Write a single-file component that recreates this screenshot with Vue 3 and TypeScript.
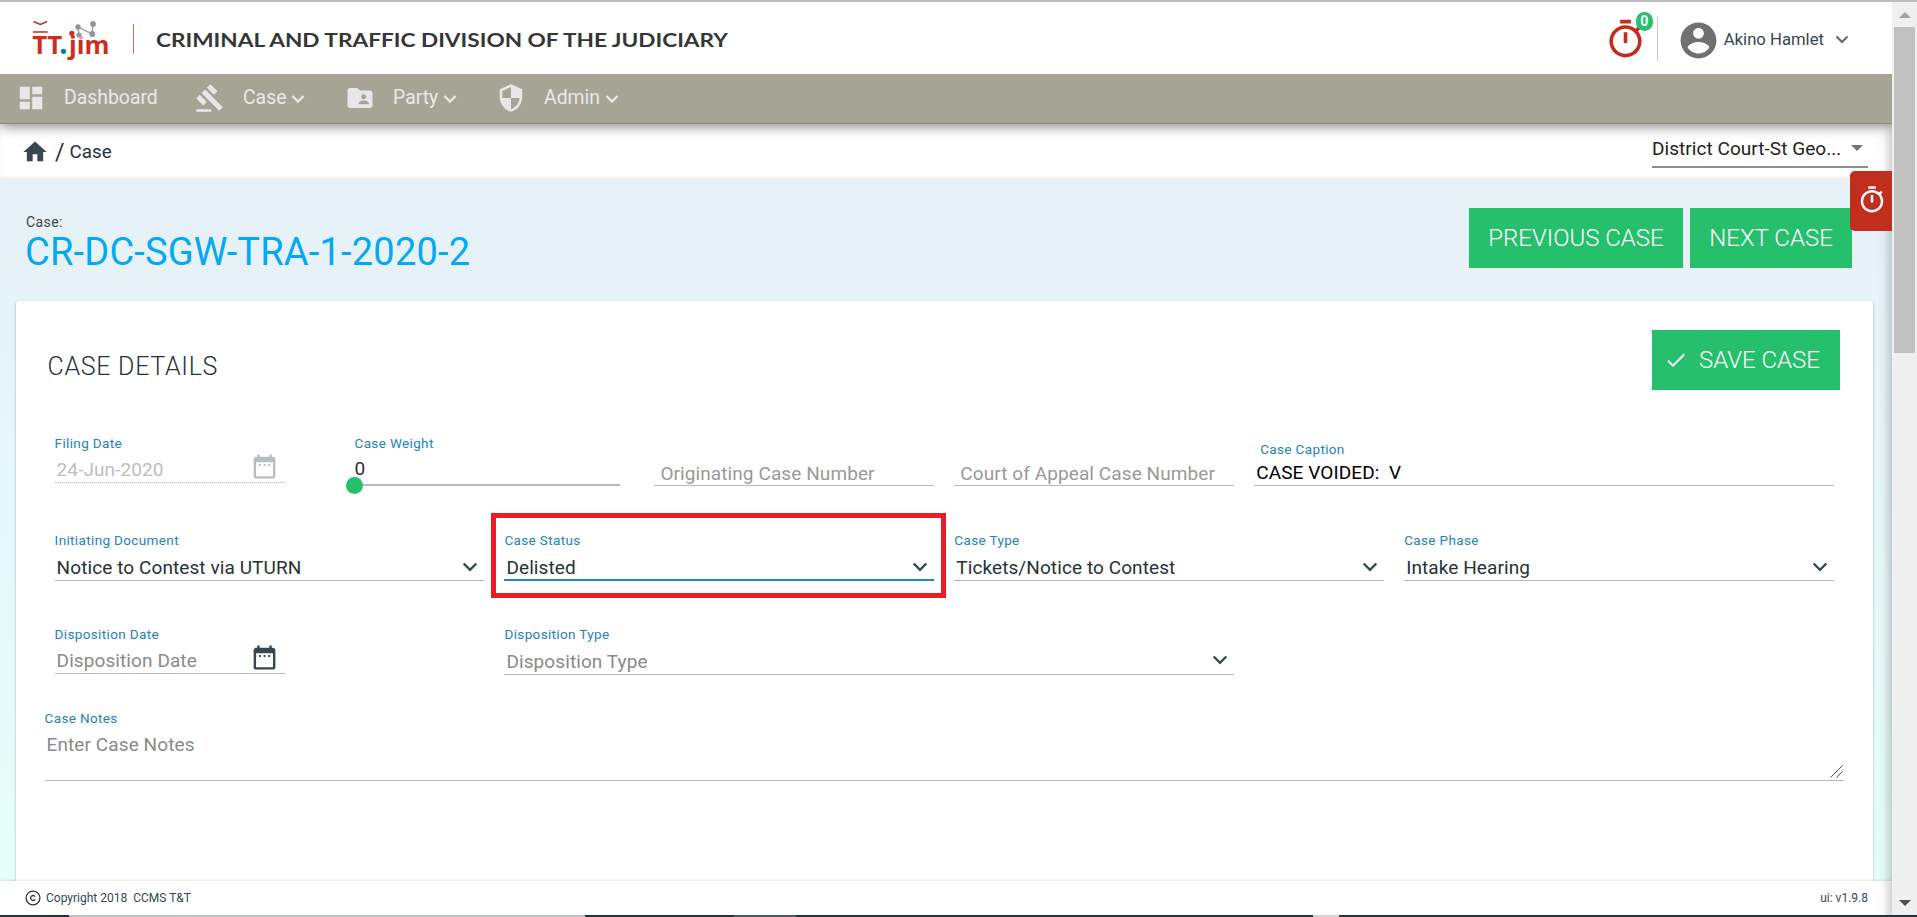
<script setup lang="ts">
import { ref } from 'vue'

interface NavItem {
  label: string
  icon: string
  menu: boolean
  cls: string
}

interface Field {
  label: string
  value: string
  focused?: boolean
}

const nav: NavItem[] = [
  { label: 'Dashboard', menu: false, cls: 'n-dash', icon: 'M3 13h8V3H3v10zm0 8h8v-6H3v6zm10 0h8V11h-8v10zm0-18v6h8V3h-8z' },
  {
    label: 'Case', menu: true, cls: 'n-case',
    icon: 'M1 21h12v2H1zM5.245 8.07l2.83-2.827 14.14 14.142-2.828 2.828zM12.317 1l5.657 5.656-2.83 2.83-5.654-5.66zM3.825 9.485l5.657 5.657-2.828 2.828-5.657-5.657z',
  },
  {
    label: 'Party', menu: true, cls: 'n-party',
    icon: 'M20 6h-8l-2-2H4c-1.1 0-1.99.9-1.99 2L2 18c0 1.1.9 2 2 2h16c1.1 0 2-.9 2-2V8c0-1.1-.9-2-2-2zm-5 3c1.1 0 2 .9 2 2s-.9 2-2 2-2-.9-2-2 .9-2 2-2zm4 8h-8v-1c0-1.33 2.67-2 4-2s4 .67 4 2v1z',
  },
  {
    label: 'Admin', menu: true, cls: 'n-admin',
    icon: 'M12 1L3 5v6c0 5.55 3.84 10.74 9 12 5.16-1.26 9-6.45 9-12V5l-9-4zm0 10.99h7c-.53 4.12-3.28 7.79-7 8.94V12H5V6.3l7-3.11v8.8z',
  },
]

const stopwatch =
  'M15 1H9v2h6V1zm-4 13h2V8h-2v6zm8.03-6.61l1.42-1.42c-.43-.51-.9-.99-1.41-1.41l-1.42 1.42C16.07 4.74 14.12 4 12 4c-4.97 0-9 4.03-9 9s4.02 9 9 9 9-4.03 9-9c0-2.12-.74-4.07-1.97-5.61zM12 20c-3.87 0-7-3.13-7-7s3.13-7 7-7 7 3.13 7 7-3.13 7-7 7z'

const calendar =
  'M9 10H7.5v1.5H9zM12.75 10h-1.5v1.5h1.5zM16.5 10H15v1.5h1.5zM19 4h-1V2h-2v2H8V2H6v2H5c-1.11 0-2 .9-2 2v14c0 1.1.89 2 2 2h14c1.1 0 2-.9 2-2V6c0-1.1-.9-2-2-2zm0 16H5V8.5h14z'

const selects = ref<Field[]>([
  { label: 'Initiating Document', value: 'Notice to Contest via UTURN' },
  { label: 'Case Status', value: 'Delisted', focused: true },
  { label: 'Case Type', value: 'Tickets/Notice to Contest' },
  { label: 'Case Phase', value: 'Intake Hearing' },
])
</script>

<template>
  <div class="window">
    <div class="top-edge"></div>
    <div class="body">
      <div class="page">
        <header class="header">
          <svg class="logo" width="90" height="50" viewBox="24 12 90 50">
            <path d="M33.5 21.5l6.8 3 6.8-3" fill="none" stroke="#c8311f" stroke-width="1.6" />
            <path d="M33.500 32h13.500" stroke="#d0604f" stroke-width="2" stroke-linecap="round" />
            <g class="logo-text">
              <text x="32.300" y="54" textLength="30" lengthAdjust="spacingAndGlyphs">TT</text>
              <text x="69" y="54" textLength="40.500" lengthAdjust="spacingAndGlyphs">jim</text>
            </g>
            <circle cx="63.500" cy="51.300" r="2.600" fill="#0f75bc" />
            <circle cx="79.500" cy="34.500" r="3.400" fill="#fff" />
            <circle cx="71.800" cy="33.300" r="2.600" fill="#c8311f" />
            <path d="M79 35l-1-8 14 7 1-10" fill="none" stroke="#a0a2a4" stroke-width="1.400" />
            <g fill="#939598">
              <circle cx="78" cy="27" r="2.700" />
              <circle cx="93" cy="24" r="2.900" />
              <circle cx="79" cy="35" r="2.600" />
              <circle cx="92.300" cy="34" r="2.900" />
            </g>
          </svg>
          <span class="rule"></span>
          <svg class="title" width="576" height="26" viewBox="0 0 576 26">
            <text x="0" y="20" textLength="572" lengthAdjust="spacingAndGlyphs">CRIMINAL AND TRAFFIC DIVISION OF THE JUDICIARY</text>
          </svg>
          <div class="user">
            <div class="timer">
              <svg width="43" height="43" viewBox="0 0 24 24"><path :d="stopwatch" fill="#c12e1d" /></svg>
              <span class="badge">0</span>
            </div>
            <svg class="avatar" width="43" height="43" viewBox="0 0 24 24">
              <path fill="#707070" d="M12 2C6.480 2 2 6.480 2 12s4.480 10 10 10 10-4.480 10-10S17.520 2 12 2zm0 3c1.660 0 3 1.340 3 3s-1.340 3-3 3-3-1.340-3-3 1.340-3 3-3zm0 14.200c-2.500 0-4.710-1.280-6-3.220.03-1.990 4-3.080 6-3.080 1.990 0 5.970 1.090 6 3.080-1.290 1.940-3.500 3.220-6 3.220z" />
            </svg>
            <span class="name">Akino Hamlet</span>
            <svg class="name-caret" width="14" height="9" viewBox="0 0 14 9"><path d="M1.500 1.500L7 7l5.500-5.500" fill="none" stroke="#666" stroke-width="2" /></svg>
          </div>
        </header>

        <nav class="nav">
          <a v-for="n in nav" :key="n.label" class="nav-item" :class="n.cls">
            <svg width="30" height="30" viewBox="0 0 24 24"><path :d="n.icon" fill="#e7e7e7" /></svg>
            <span>{{ n.label }}</span>
            <svg v-if="n.menu" class="nav-caret" width="14" height="10" viewBox="0 0 14 10">
              <path d="M1.500 2L7 7.500 12.500 2" fill="none" stroke="#e7e7e7" stroke-width="2.400" />
            </svg>
          </a>
        </nav>

        <div class="crumbs">
          <div class="path">
            <svg width="28" height="28" viewBox="0 0 24 24"><path d="M10 20v-6h4v6h5v-8h3L12 3 2 12h3v8z" fill="#37474f" /></svg>
            <span class="slash">/</span><span class="crumb">Case</span>
          </div>
          <div class="court">
            <span>District Court-St Geo...</span>
            <svg width="12" height="6" viewBox="0 0 12 6"><path d="M0 0h12L6 6z" fill="#757575" /></svg>
          </div>
        </div>

        <main class="content">
          <div class="case-head">
            <div>
              <div class="case-label">Case:</div>
              <div class="case-no">CR-DC-SGW-TRA-1-2020-2</div>
            </div>
            <div class="switch">
              <button class="btn b-prev">PREVIOUS CASE</button>
              <button class="btn b-next">NEXT CASE</button>
            </div>
          </div>

          <section class="card">
            <div class="card-head">
              <h2>CASE DETAILS</h2>
              <button class="btn b-save">
                <svg width="24" height="24" viewBox="0 0 24 24"><path d="M9 16.170L4.830 12l-1.420 1.410L9 19 21 7l-1.410-1.410z" fill="#fff" /></svg>
                <span>SAVE CASE</span>
              </button>
            </div>

            <div class="grid row1">
              <div class="cell s2">
                <label>Filing Date</label>
                <div class="control date disabled">
                  <span>24-Jun-2020</span>
                  <svg width="29" height="29" viewBox="0 0 24 24"><path :d="calendar" fill="#b9bec1" /></svg>
                </div>
              </div>
              <div class="cell s2">
                <label>Case Weight</label>
                <div class="weight">0</div>
                <div class="slider"><i></i></div>
              </div>
              <div class="cell s2"><div class="control bare">Originating Case Number</div></div>
              <div class="cell s2"><div class="control bare">Court of Appeal Case Number</div></div>
              <div class="cell s4 caption">
                <label>Case Caption</label>
                <div class="control strong">CASE VOIDED:&nbsp; V</div>
              </div>
            </div>

            <div class="grid row2">
              <div v-for="f in selects" :key="f.label" class="cell s3">
                <label>{{ f.label }}</label>
                <div class="control select" :class="{ focused: f.focused }">
                  <span>{{ f.value }}</span>
                  <svg width="16" height="12" viewBox="0 0 16 12"><path d="M1.700 2.500L8 8.800l6.300-6.300" fill="none" stroke="#37474f" stroke-width="2.400" /></svg>
                </div>
                <div v-if="f.focused" class="highlight"></div>
              </div>
            </div>

            <div class="grid row3">
              <div class="cell s2">
                <label>Disposition Date</label>
                <div class="control date hint">
                  <span>Disposition Date</span>
                  <svg width="29" height="29" viewBox="0 0 24 24"><path :d="calendar" fill="#37474f" /></svg>
                </div>
              </div>
              <div class="cell s5 from4">
                <label>Disposition Type</label>
                <div class="control select hint">
                  <span>Disposition Type</span>
                  <svg width="16" height="12" viewBox="0 0 16 12"><path d="M1.700 2.500L8 8.800l6.300-6.300" fill="none" stroke="#37474f" stroke-width="2.400" /></svg>
                </div>
              </div>
            </div>

            <div class="notes">
              <label>Case Notes</label>
              <div class="area">
                <span>Enter Case Notes</span>
                <svg width="13" height="13" viewBox="0 0 13 13"><path d="M.5 12.500l12-12M6.500 12.500l6-6" stroke="#555" stroke-width="1" /></svg>
              </div>
            </div>
          </section>
        </main>

        <footer class="footer">
          <div class="copy">
            <svg width="16" height="16" viewBox="0 0 16 16" fill="none" stroke="#263238">
              <circle cx="8" cy="8" r="6.900" stroke-width="1.300" />
              <path d="M10.200 6.600a2.500 2.500 0 1 0 0 2.800" stroke-width="1.300" />
            </svg>
            <span>Copyright 2018&nbsp; CCMS T&amp;T</span>
          </div>
          <span class="version">ui: v1.9.8</span>
        </footer>

        <div class="side-tab">
          <svg width="30" height="30" viewBox="0 0 24 24"><path :d="stopwatch" fill="#fff" /></svg>
        </div>
        <div class="inner-shade"></div>
      </div>

      <div class="scrollbar">
        <svg width="12" height="6" viewBox="0 0 12 6"><path d="M0 6h12L6 0z" fill="#a3a3a3" /></svg>
        <div class="thumb"></div>
        <svg class="down" width="12" height="6" viewBox="0 0 12 6"><path d="M0 0h12L6 6z" fill="#505050" /></svg>
      </div>
    </div>
    <div class="bottom-edge">
      <i class="d1"></i><i class="l1"></i><i class="d2"></i><i class="m1"></i><i class="d3"></i><i class="l2"></i><i class="d4"></i>
    </div>
  </div>
</template>

<style>
html,
body {
  margin: 0;
  overflow: hidden;
}
</style>

<style scoped>
* {
  box-sizing: border-box;
}
.window {
  display: flex;
  flex-direction: column;
  width: 1917px;
  height: 917px;
  font-family: Roboto, 'Liberation Sans', sans-serif;
  color: #263238;
  background: #fff;
}
svg {
  display: block;
  flex: none;
}
.top-edge {
  height: 2px;
  background: #bdbdbd;
}
.body {
  display: flex;
  height: 913px;
}
.page {
  position: relative;
  display: flex;
  flex-direction: column;
  width: 1892px;
  overflow: hidden;
}

.header {
  position: relative;
  z-index: 3;
  display: flex;
  flex: none;
  align-items: center;
  height: 72px;
  padding: 0 43px 0 24px;
  background: #fff;
}
.logo {
  margin-top: -3px;
}
.logo-text text {
  font-family: 'Open Sans', sans-serif;
  font-weight: 700;
  font-size: 25px;
  fill: #c8311f;
}
.rule {
  width: 1px;
  height: 30px;
  margin: 1px 22px 0 19px;
  background: #dd6b5c;
}
.title {
  margin-top: 4px;
}
.title text {
  font-family: Lato, sans-serif;
  font-weight: 700;
  font-size: 19.500px;
  fill: #363636;
}
.user {
  display: flex;
  align-items: center;
  margin-left: auto;
}
.timer {
  position: relative;
  height: 44px;
  width: 54px;
  margin: 2px 19px 0 0;
  border-right: 1px solid #ccc;
  padding-top: 1px;
}
.badge {
  position: absolute;
  left: 32px;
  top: -5px;
  width: 17px;
  height: 19px;
  border-radius: 9px;
  background: #27c06c;
  color: #fff;
  font: 700 14px/19px Roboto, sans-serif;
  text-align: center;
}
.avatar {
  margin-top: 5px;
}
.name {
  margin: 4px 11px 0 4px;
  font-size: 16.700px;
  line-height: 24px;
  color: #37474f;
}
.name-caret {
  margin-top: 2px;
}
.nav {
  position: relative;
  z-index: 2;
  display: flex;
  flex: none;
  height: 50px;
  background: #a6a494;
  border-bottom: 1px solid #8e8b78;
  box-shadow: 0 2px 12px rgba(0, 0, 0, 0.5);
}
.nav-item {
  display: flex;
  align-items: center;
  height: 47px;
  font-size: 19.400px;
  font-weight: 400;
  color: #e9e9e9;
}
.nav-item span {
  margin-left: 18px;
}
.nav-caret {
  margin: 3px 0 0 5px;
}
.n-dash {
  width: 179px;
  padding-left: 16px;
}
.n-case {
  width: 151px;
  padding-left: 16px;
}
.n-party {
  width: 151px;
  padding-left: 15px;
}
.n-admin {
  padding-left: 15px;
}

.crumbs {
  display: flex;
  flex: none;
  justify-content: space-between;
  height: 56px;
  padding: 0 24px 0 21px;
  background: #fff;
  box-shadow: inset 0 -3px 4px -2px rgba(0, 0, 0, 0.14);
}
.path {
  display: flex;
  align-items: center;
  height: 56px;
  font-size: 18.800px;
}
.slash {
  margin-left: 6px;
  font-size: 23px;
}
.crumb {
  margin-left: 5px;
}
.court {
  display: flex;
  justify-content: space-between;
  width: 216px;
  height: 44px;
  padding: 12px 5px 0 0;
  border-bottom: 2px solid #8f8f8f;
  font-size: 19px;
  line-height: 26px;
  letter-spacing: 0.05px;
  color: #222;
}
.court svg {
  margin-top: 9px;
}

.content {
  flex: 1;
  min-height: 0;
  padding: 28px 19px 0 16px;
  background: linear-gradient(#e6f0f7, #e6f5f9 30%, #e6fffa);
}
.case-head {
  display: flex;
  justify-content: space-between;
  height: 93px;
  padding: 0 21px 0 10px;
}
.case-label {
  margin-top: 5px;
  font-size: 14px;
  line-height: 18px;
  letter-spacing: 0.4px;
  color: #444;
}
.case-no {
  margin: 1px 0 0 -1px;
  font-size: 38px;
  line-height: 40px;
  letter-spacing: 0.2px;
  color: #03a9f4;
}
.switch {
  display: flex;
  gap: 7px;
}
.btn {
  display: flex;
  align-items: center;
  justify-content: center;
  height: 60px;
  padding: 0;
  border: 0;
  background: #26bf6b;
  color: #fff;
  font: 300 24px/60px Roboto, sans-serif;
}
.b-prev {
  width: 214px;
}
.b-next {
  width: 162px;
}
.b-save {
  width: 188px;
  padding-right: 8px;
}
.b-save span {
  margin-left: 11px;
}
.card {
  height: 620px;
  padding: 29px 29px 0 28.600px;
  border-radius: 3px;
  background: #fff;
  box-shadow: 0 1px 3px rgba(0, 0, 0, 0.28);
}
.card-head {
  display: flex;
  justify-content: space-between;
  height: 60px;
  padding: 0 4px 0 3px;
}
.card h2 {
  margin: 22px 0 0;
  font-weight: 300;
  font-size: 25px;
  line-height: 30px;
  letter-spacing: 0.7px;
}
.grid {
  display: grid;
  grid-template-columns: repeat(12, minmax(0, 1fr));
}
.cell {
  padding: 0 10px;
  position: relative;
}
.s2 {
  grid-column: span 2;
}
.s3 {
  grid-column: span 3;
}
.s4 {
  grid-column: span 4;
}
.s5.from4 {
  grid-column: 4 / span 5;
}
label {
  display: block;
  font-size: 13.500px;
  line-height: 18px;
  letter-spacing: 0.36px;
  color: #2482be;
}
.control {
  display: flex;
  justify-content: space-between;
  padding-left: 2px;
  border-bottom: 1px solid #b8b8b8;
  font-size: 19px;
  letter-spacing: 0.09px;
  white-space: nowrap;
}
.row1 {
  height: 96px;
  padding-top: 44px;
}
.date {
  width: 230px;
  height: 31px;
  line-height: 35px;
}
.date svg {
  margin: 0 6px 0 0;
}
.disabled {
  border-bottom-style: dotted;
  color: #bdbdbd;
}
.weight {
  height: 32px;
  font-size: 19px;
  line-height: 33px;
}
.slider {
  width: 266px;
  height: 2px;
  background: #bbb;
}
.slider i {
  display: block;
  width: 17px;
  height: 17px;
  border-radius: 50%;
  background: #26bf6b;
  transform: translate(-8px, -7px);
}
.bare {
  height: 52px;
  padding: 28px 0 0 6px;
  line-height: 24px;
  color: #999;
}
.caption label {
  margin: 6px 0 0 6px;
}
.strong {
  height: 28px;
  line-height: 30px;
  color: #000;
}
.row2 {
  height: 94px;
  padding-top: 45px;
}
.select {
  height: 32px;
  line-height: 38px;
}
.select svg {
  margin: 12px 6px 0 0;
}
.row3 {
  height: 96px;
  padding-top: 45px;
}
.row3 .select svg {
  margin-top: 11px;
}
.focused {
  border-bottom: 2px solid #2088c2;
}
.highlight {
  position: absolute;
  left: -3.300px;
  top: -18px;
  width: 455px;
  height: 85px;
  border: 5px solid #ed1c24;
}
.hint {
  color: #8a8a8a;
}
.notes label {
  margin-top: 33px;
}
.area {
  display: flex;
  justify-content: space-between;
  align-items: flex-end;
  height: 54px;
  padding: 0 1px 2px 2px;
  border-bottom: 1px solid #b8b8b8;
  font-size: 19px;
  letter-spacing: 0.09px;
  color: #8a8a8a;
}
.area span {
  align-self: flex-start;
  line-height: 36px;
}

.footer {
  position: relative;
  display: flex;
  flex: none;
  justify-content: space-between;
  align-items: center;
  height: 34px;
  padding: 0 24px 0 25px;
  background: #fff;
  box-shadow: 0 0 3px rgba(0, 0, 0, 0.2);
  font-size: 12px;
  color: #37474f;
}
.copy {
  display: flex;
  align-items: center;
  gap: 5px;
}
.side-tab {
  position: absolute;
  z-index: 4;
  right: 0;
  top: 169px;
  display: flex;
  justify-content: center;
  padding: 14px 0 0 2px;
  width: 42px;
  height: 60px;
  border-radius: 5px 0 0 5px;
  background: #c12e1d;
}
.inner-shade {
  position: absolute;
  right: 0;
  top: 122px;
  bottom: 0;
  width: 14px;
  background: linear-gradient(to right, rgba(0, 0, 0, 0), rgba(0, 0, 0, 0.03) 40%, rgba(0, 0, 0, 0.17));
}

.scrollbar {
  display: flex;
  flex-direction: column;
  align-items: center;
  width: 25px;
  padding: 10px 0 9px;
  background: #f0f0f0;
}
.thumb {
  width: 21px;
  height: 326px;
  margin-top: 9px;
  background: #c1c1c1;
}
.down {
  margin-top: auto;
}
.bottom-edge {
  display: flex;
  height: 2px;
}
.bottom-edge i {
  height: 2px;
  background: #1e3340;
}
.bottom-edge .d1 {
  width: 69px;
}
.bottom-edge .l1 {
  width: 516px;
  background: #bfc1c2;
}
.bottom-edge .d2 {
  width: 149px;
}
.bottom-edge .m1 {
  width: 62px;
  background: #4b5c66;
}
.bottom-edge .d3 {
  width: 517px;
}
.bottom-edge .l2 {
  width: 26px;
  background: #d5d5d5;
}
.bottom-edge .d4 {
  flex: 1;
}
</style>
